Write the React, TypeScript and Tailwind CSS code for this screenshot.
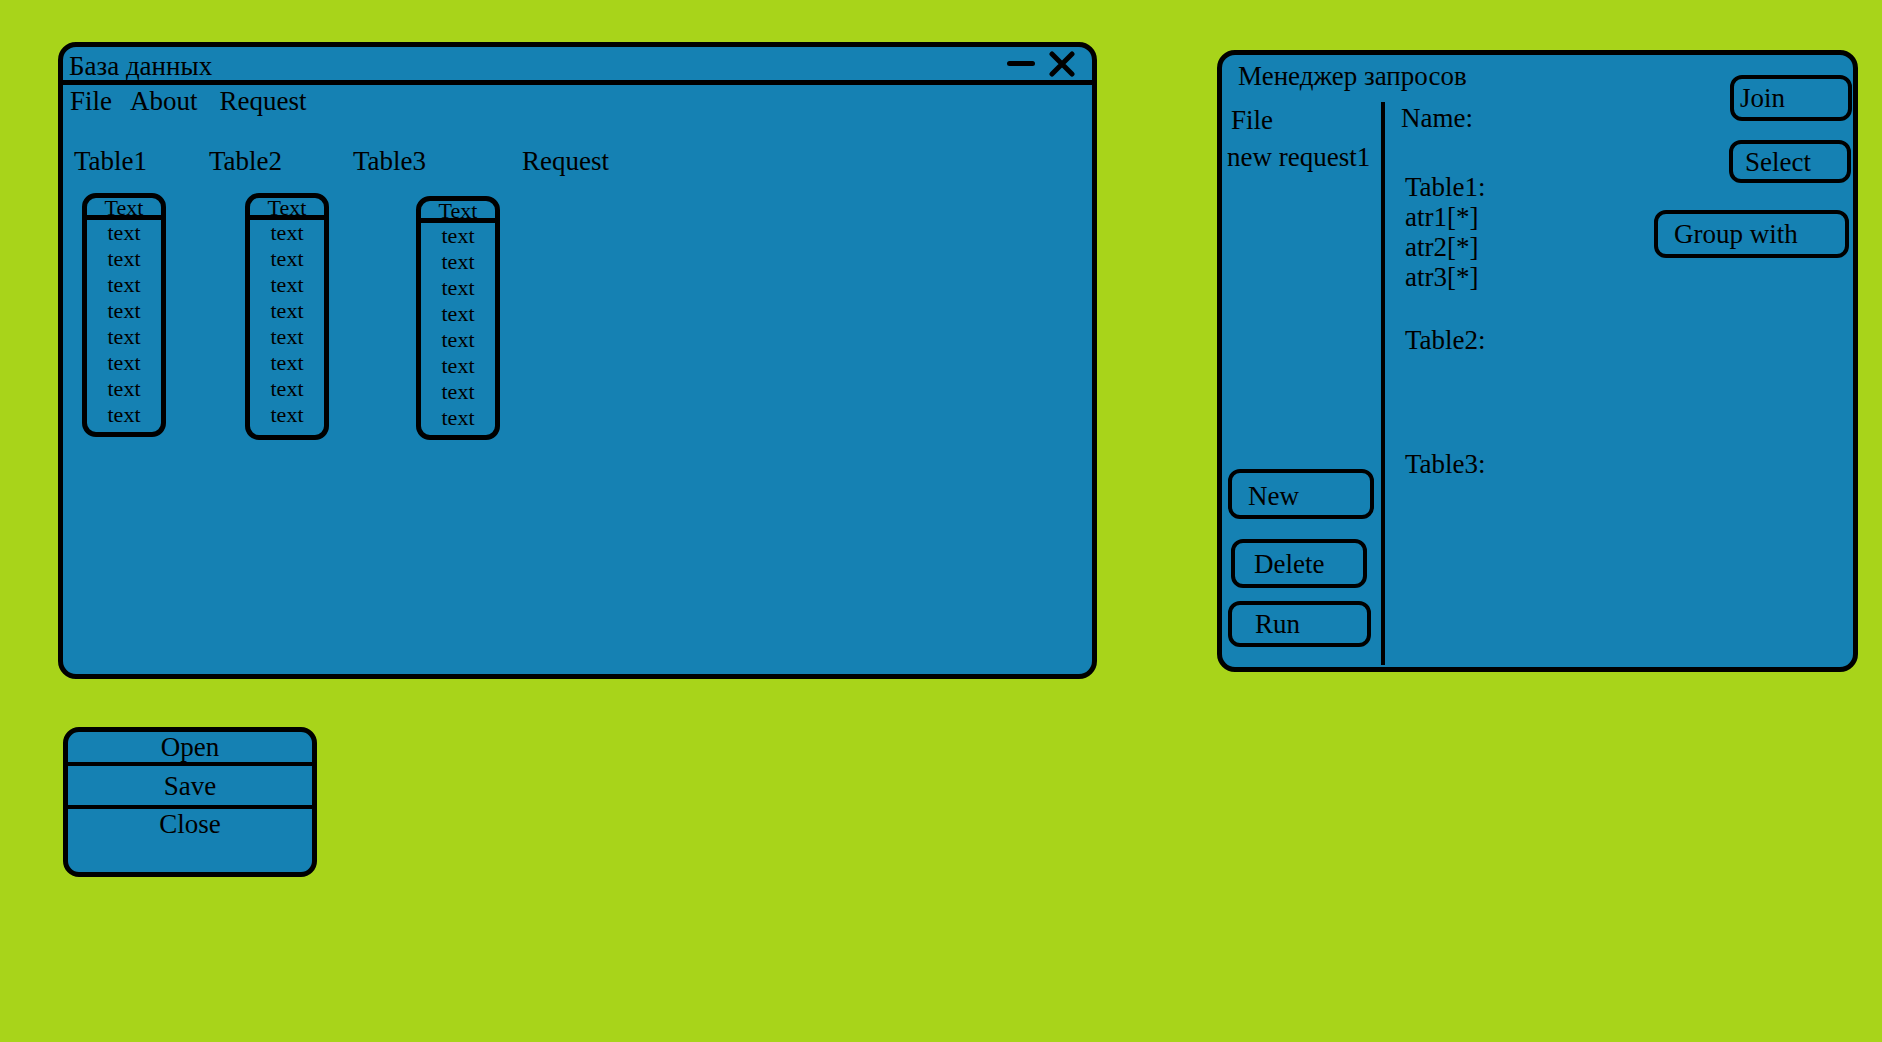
import { ReactNode } from "react";

const rows = ["text", "text", "text", "text", "text", "text", "text", "text"];

function TableBox({ className = "" }: { className?: string }) {
  return (
    <div className={`w-[84px] border-[5px] border-black rounded-[14px] pb-[4px] ${className}`}>
      <div className="h-[22px] border-b-[5px] border-black text-center text-[22px] leading-[20px]">Text</div>
      {rows.map((r, i) => (
        <div key={i} className="text-center text-[22px] leading-[26px]">
          {r}
        </div>
      ))}
    </div>
  );
}

function Btn({ children, className = "" }: { children: ReactNode; className?: string }) {
  return (
    <div className={`flex items-center border-[4px] border-black rounded-[12px] text-[27px] leading-[30px] ${className}`}>
      {children}
    </div>
  );
}

export default function App() {
  return (
    <div className="w-[1882px] h-[1042px] overflow-hidden bg-[#a8d41a] flex items-start pt-[42px] pl-[58px] font-['Liberation_Serif',serif] text-black">
      <div className="flex flex-col">
        {/* main window */}
        <div className="w-[1039px] h-[637px] bg-[#1581b3] border-[5px] border-black rounded-[18px] flex flex-col">
          <div className="h-[38px] border-b-[5px] border-black flex items-center justify-between pl-[6px] pr-[17px]">
            <span className="text-[27px] leading-[30px] pt-[4px]">База данных</span>
            <div className="flex items-center gap-[14px]">
              <div className="w-[28px] h-[5px] rounded-full bg-black" />
              <svg width="26" height="26" viewBox="0 0 26 26">
                <path d="M3 3 L23 23 M23 3 L3 23" stroke="black" strokeWidth="5" strokeLinecap="round" />
              </svg>
            </div>
          </div>
          <div className="flex text-[27px] leading-[30px] mt-[1px] pl-[7px]">
            <span>File</span>
            <span className="ml-[18px]">About</span>
            <span className="ml-[22px]">Request</span>
          </div>
          <div className="grid grid-cols-[135px_144px_169px_auto] pl-[11px] mt-[30px] text-[27px] leading-[30px]">
            <span>Table1</span>
            <span>Table2</span>
            <span>Table3</span>
            <span>Request</span>
          </div>
          <div className="flex items-start pl-[19px] mt-[17px]">
            <TableBox />
            <TableBox className="ml-[79px] pb-[7px]" />
            <TableBox className="ml-[87px] mt-[3px]" />
          </div>
        </div>

        {/* file menu */}
        <div className="mt-[48px] ml-[5px] w-[254px] h-[150px] bg-[#1581b3] border-[5px] border-black rounded-[16px] text-center text-[27px] leading-[30px]">
          <div className="h-[34px] border-b-[4px] border-black">Open</div>
          <div className="h-[43px] border-b-[4px] border-black pt-[5px]">Save</div>
          <div>Close</div>
        </div>
      </div>

      {/* request manager */}
      <div className="ml-[120px] mt-[8px] w-[641px] h-[622px] bg-[#1581b3] border-[5px] border-black rounded-[18px] flex">
        <div className="flex-1 flex flex-col">
          <div className="h-[47px] pl-[16px] pt-[6px] text-[27px] leading-[30px]">Менеджер запросов</div>
          <div className="flex-1 flex">
            <div className="w-[159px] flex flex-col text-[27px] leading-[30px]">
              <div className="pl-[9px] mt-[3px]">File</div>
              <div className="pl-[5px] mt-[7px]">new request1</div>
              <Btn className="mt-auto ml-[6px] w-[146px] h-[50px] pl-[16px] pt-[4px]">New</Btn>
              <Btn className="mt-[20px] ml-[9px] w-[136px] h-[49px] pl-[19px]">Delete</Btn>
              <Btn className="mt-[13px] ml-[6px] w-[143px] h-[46px] pl-[23px] mb-[20px]">Run</Btn>
            </div>
            <div className="w-[4px] bg-black mb-[2px]" />
            <div className="flex-1 flex flex-col pl-[16px] text-[27px] leading-[30px]">
              <div className="mt-[1px]">Name:</div>
              <div className="ml-[4px] mt-[39px]">Table1:</div>
              <div className="ml-[4px]">atr1[*]</div>
              <div className="ml-[4px]">atr2[*]</div>
              <div className="ml-[4px]">atr3[*]</div>
              <div className="ml-[4px] mt-[33px]">Table2:</div>
              <div className="ml-[4px] mt-[94px]">Table3:</div>
            </div>
          </div>
        </div>
        <div className="w-[199px] flex flex-col items-end">
          <Btn className="mt-[20px] mr-[1px] w-[122px] h-[46px] pl-[6px]">Join</Btn>
          <Btn className="mt-[19px] mr-[2px] w-[122px] h-[43px] pl-[12px]">Select</Btn>
          <Btn className="mt-[27px] mr-[4px] w-[195px] h-[48px] pl-[16px]">Group with</Btn>
        </div>
      </div>
    </div>
  );
}
